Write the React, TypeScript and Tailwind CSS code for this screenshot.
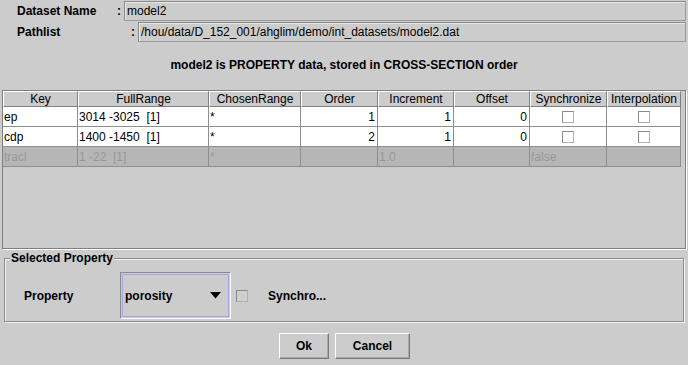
import React from "react";

const colW = ["w-[75px]", "w-[131px]", "w-[92px]", "w-[77px]", "w-[76px]", "w-[76px]", "w-[77px]", "w-[74px]"];
const headers = ["Key", "FullRange", "ChosenRange", "Order", "Increment", "Offset", "Synchronize", "Interpolation"];

function Check({ bg = "bg-white" }: { bg?: string }) {
  return (
    <div
      className={`w-[12px] h-[12px] ${bg} border border-t-[#8a8a8a] border-l-[#8a8a8a] border-b-[#b0b0b0] border-r-[#b0b0b0]`}
    />
  );
}

type Cell = { t?: string; align?: "l" | "r" | "c"; check?: boolean };

const rows: Cell[][] = [
  [
    { t: "ep" },
    { t: "3014 -3025  [1]" },
    { t: "*" },
    { t: "1", align: "r" },
    { t: "1", align: "r" },
    { t: "0", align: "r" },
    { check: true },
    { check: true },
  ],
  [
    { t: "cdp" },
    { t: "1400 -1450  [1]" },
    { t: "*" },
    { t: "2", align: "r" },
    { t: "1", align: "r" },
    { t: "0", align: "r" },
    { check: true },
    { check: true },
  ],
];

const disabledRow: string[] = ["tracl", "1 -22  [1]", "*", "", "1.0", "", "false", ""];

export default function App() {
  return (
    <div className="w-[688px] h-[365px] bg-[#cccccc] text-[12px] text-black font-['Liberation_Sans',Arial,Helvetica,sans-serif] flex flex-col overflow-hidden">
      {/* Dataset Name */}
      <div className="flex h-[20px] mt-[1px] items-stretch">
        <div className="w-[117px] pl-[17px] font-bold flex items-center">Dataset Name</div>
        <div className="w-[7px] font-bold flex items-center">:</div>
        <div className="flex-1 mr-[2px] border border-t-[#8a8a8a] border-l-[#8a8a8a] border-b-[#9a9a9a] border-r-[#9a9a9a] shadow-[inset_1px_1px_0_#e8e8e8] flex items-center pl-[2px] leading-none">
          model2
        </div>
      </div>
      {/* Pathlist */}
      <div className="flex h-[20px] mt-[1px] items-stretch">
        <div className="w-[131px] pl-[17px] font-bold flex items-center">Pathlist</div>
        <div className="w-[7px] font-bold flex items-center">:</div>
        <div className="flex-1 mr-[2px] border border-t-[#8a8a8a] border-l-[#8a8a8a] border-b-[#9a9a9a] border-r-[#9a9a9a] shadow-[inset_1px_1px_0_#e8e8e8] flex items-center pl-[2px] leading-none">
          /hou/data/D_152_001/ahglim/demo/int_datasets/model2.dat
        </div>
      </div>
      {/* Title */}
      <div className="h-[46px] flex items-center justify-center font-bold">
        model2 is PROPERTY data, stored in CROSS-SECTION order
      </div>
      {/* Table panel */}
      <div className="mx-[2px] mt-[2px] h-[159px] border border-[#808080] shadow-[1px_1px_0_#ffffff] flex flex-col">
        {/* Header */}
        <div className="flex h-[16px]">
          {headers.map((h, i) => (
            <div
              key={h}
              className={`${colW[i]} h-[16px] bg-[#cccccc] border-t border-l border-t-white border-l-white border-r border-b border-r-[#808080] border-b-[#808080] flex items-center justify-center leading-none overflow-hidden whitespace-nowrap`}
            >
              {h}
            </div>
          ))}
        </div>
        {rows.map((r, ri) => (
          <div key={ri} className="flex h-[20px]">
            {r.map((c, ci) => (
              <div
                key={ci}
                className={`${colW[ci]} h-[20px] bg-white border-r border-b border-[#8e8e8e] flex items-center leading-none whitespace-pre overflow-hidden ${
                  c.check ? "justify-center" : c.align === "r" ? "justify-end pr-[2px]" : "pl-[1px]"
                }`}
              >
                {c.check ? <Check /> : c.t}
              </div>
            ))}
          </div>
        ))}
        <div className="flex h-[20px]">
          {disabledRow.map((t, ci) => (
            <div
              key={ci}
              className={`${colW[ci]} h-[20px] bg-[#b6b6b6] text-[#989898] border-r border-b border-[#8e8e8e] flex items-center leading-none whitespace-pre overflow-hidden pl-[1px]`}
            >
              {t}
            </div>
          ))}
        </div>
      </div>
      {/* Selected Property group */}
      <div className="relative mx-[4px] mt-[9px] h-[64px] border border-[#8c8c8c] shadow-[inset_1px_1px_0_#f2f2f2,1px_1px_0_#f2f2f2] pt-[13px]">
        <div className="absolute left-[5px] top-[-8px] px-[1px] bg-[#cccccc] font-bold leading-[14px]">Selected Property</div>
        <div className="flex items-center h-[47px]">
          <div className="w-[115px] pl-[19px] font-bold">Property</div>
          <div className="w-[111px] h-[47px] border border-t-[#8a8a8a] border-l-[#8a8a8a] border-b-white border-r-white p-[1px] flex">
            <div className="flex-1 border border-[#a6a6e6] flex items-center justify-between pl-[2px] pr-[7px]">
              <span className="font-bold">porosity</span>
              <svg width="11" height="7" viewBox="0 0 11 7">
                <polygon points="0,0 11,0 5.5,6.5" fill="#000" />
              </svg>
            </div>
          </div>
          <div className="ml-[5px]">
            <Check bg="bg-[#cfcfcf]" />
          </div>
          <div className="ml-[20px] font-bold">Synchro...</div>
        </div>
      </div>
      {/* Buttons */}
      <div className="mt-[11px] flex justify-center gap-[6px] pl-[1px]">
        <button className="w-[50px] h-[26px] bg-[#cccccc] border border-t-white border-l-white border-b-[#7a7a7a] border-r-[#7a7a7a] shadow-[inset_-1px_-1px_0_#a8a8a8] font-bold flex items-center justify-center">
          Ok
        </button>
        <button className="w-[75px] h-[26px] bg-[#cccccc] border border-t-white border-l-white border-b-[#7a7a7a] border-r-[#7a7a7a] shadow-[inset_-1px_-1px_0_#a8a8a8] font-bold flex items-center justify-center">
          Cancel
        </button>
      </div>
    </div>
  );
}
